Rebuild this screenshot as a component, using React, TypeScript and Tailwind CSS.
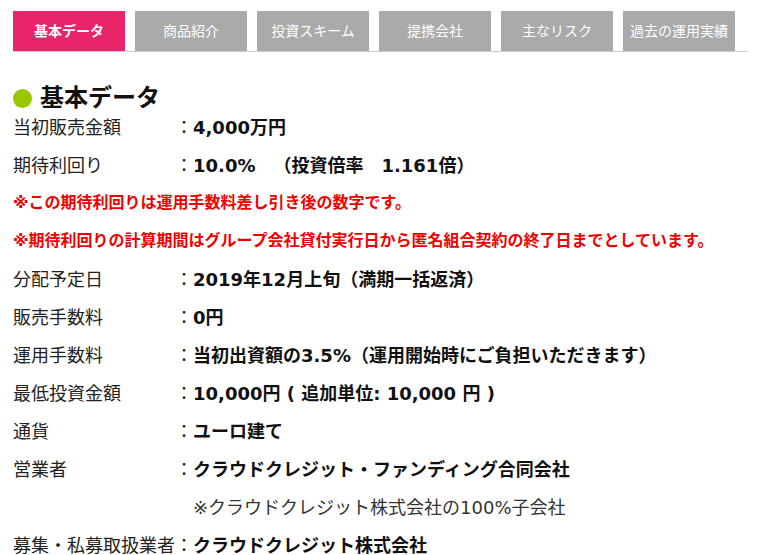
const tabs = ['基本データ', '商品紹介', '投資スキーム', '提携会社', '主なリスク', '過去の運用実績']

type Row =
  | { kind: 'item'; label: string; value: string; note?: boolean }
  | { kind: 'warn'; text: string }

const rows: Row[] = [
  { kind: 'item', label: '当初販売金額', value: '4,000万円' },
  { kind: 'item', label: '期待利回り', value: '10.0%　（投資倍率　1.161倍）' },
  { kind: 'warn', text: '※この期待利回りは運用手数料差し引き後の数字です。' },
  { kind: 'warn', text: '※期待利回りの計算期間はグループ会社貸付実行日から匿名組合契約の終了日までとしています。' },
  { kind: 'item', label: '分配予定日', value: '2019年12月上旬（満期一括返済）' },
  { kind: 'item', label: '販売手数料', value: '0円' },
  { kind: 'item', label: '運用手数料', value: '当初出資額の3.5%（運用開始時にご負担いただきます）' },
  { kind: 'item', label: '最低投資金額', value: '10,000円 ( 追加単位: 10,000 円 )' },
  { kind: 'item', label: '通貨', value: 'ユーロ建て' },
  { kind: 'item', label: '営業者', value: 'クラウドクレジット・ファンディング合同会社' },
  { kind: 'item', label: '', value: '※クラウドクレジット株式会社の100%子会社', note: true },
  { kind: 'item', label: '募集・私募取扱業者', value: 'クラウドクレジット株式会社' },
]

// full-width spaces come out narrow in the fallback font, so pad them by hand
function Value({ text }: { text: string }) {
  const parts = text.split('　')
  return (
    <>
      {parts.map((p, i) => (
        <span key={i}>
          {i > 0 && <span className="inline-block w-[18px]" />}
          {p}
        </span>
      ))}
    </>
  )
}

export default function App() {
  return (
    <div
      className="w-[758px] h-[555px] overflow-hidden bg-white text-[#222]"
      style={{ fontFamily: '"DejaVu Sans", "Noto Sans CJK JP", sans-serif' }}
    >
      <div className="ml-[13px] mr-[10px] mt-[11px] flex gap-[10px] border-b border-[#cccccc]">
        {tabs.map((t, i) => (
          <div
            key={t}
            className={
              i === 0
                ? 'flex h-[40px] w-[112px] items-center justify-center bg-[#e8246a] text-[14px] font-bold text-white'
                : 'flex h-[40px] w-[112px] items-center justify-center bg-[#aaaaaa] text-[14px] text-white'
            }
          >
            {t}
          </div>
        ))}
      </div>

      <div className="ml-[13px] mt-[36px] flex h-[20px] items-center gap-[8px]">
        <span className="h-[19px] w-[19px] rounded-full bg-[#99c800]" />
        <h2 className="text-[24px] font-bold leading-[20px] text-[#111]">基本データ</h2>
      </div>

      <div className="ml-[13px] flex flex-col">
        {rows.map((r, i) =>
          r.kind === 'warn' ? (
            <div key={i} className="flex h-[38px] items-center text-[16px] font-bold text-[#ee0000]">
              {r.text}
            </div>
          ) : (
            <div key={i} className="flex h-[38px] items-center text-[18px] whitespace-nowrap">
              <span className="w-[162px]">{r.label}</span>
              <span className="w-[18px]">{r.note ? '' : '：'}</span>
              <span className={r.note ? 'font-normal text-[#333]' : 'font-bold text-[#111]'}>
                <Value text={r.value} />
              </span>
            </div>
          )
        )}
      </div>
    </div>
  )
}
